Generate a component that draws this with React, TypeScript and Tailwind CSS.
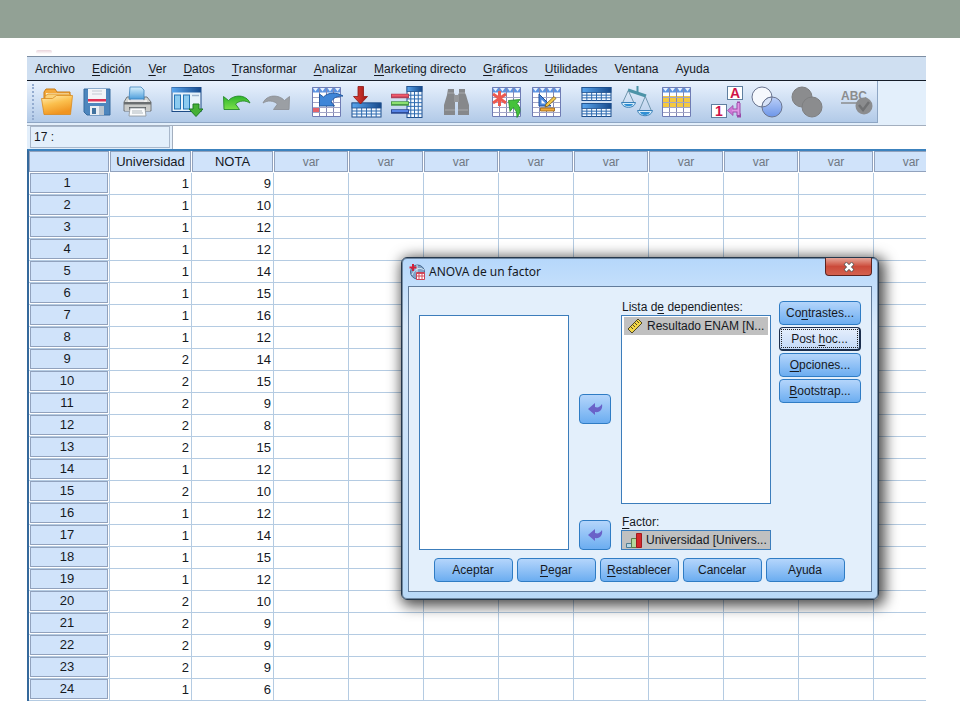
import type { ReactNode } from 'react';

interface Row {
  universidad: number;
  nota: number;
}

const UNIVERSIDAD = [1, 1, 1, 1, 1, 1, 1, 1, 2, 2, 2, 2, 2, 1, 2, 1, 1, 1, 1, 2, 2, 2, 2, 1];
const NOTA = [9, 10, 12, 12, 14, 15, 16, 12, 14, 15, 9, 8, 15, 12, 10, 12, 14, 15, 12, 10, 9, 9, 9, 6];
const rows: Row[] = UNIVERSIDAD.map((universidad, i) => ({ universidad, nota: NOTA[i] }));

const emptyColumns = [1, 2, 3, 4, 5, 6, 7, 8, 9];

// "_" marks the letter that follows it as the keyboard mnemonic
const menu = [
  'Archivo',
  '_Edición',
  '_Ver',
  '_Datos',
  '_Transformar',
  '_Analizar',
  '_Marketing directo',
  '_Gráficos',
  '_Utilidades',
  'Ventana',
  'Ayuda',
];

function Mnemonic({ text }: { text: string }) {
  const at = text.indexOf('_');
  if (at < 0) return <span>{text}</span>;
  return (
    <span>
      {text.slice(0, at)}
      <span className="underline underline-offset-2">{text[at + 1]}</span>
      {text.slice(at + 2)}
    </span>
  );
}

/* ---------- toolbar icons ---------- */

function Sheet({ band }: { band?: ReactNode }) {
  return (
    <g>
      <path d="M1 1.500h29v29H1z" fill="#fff" />
      {band}
      <path d="M1 1.500h29v5H1z" fill="#5b93e2" />
      {[2, 9, 16.5, 24].map((x) => (
        <path key={x} d={`M${x} 2h5l-2.500 3.500z`} fill="#e6f0ff" />
      ))}
      <path d="M8.500 2v29M15.500 2v29M22.500 2v29" stroke="#8187b4" />
      <path d="M1 11.500h29M1 16.500h29M1 21.500h29M1 26.500h29" stroke="#a3a6c6" />
      <path d="M1.500 1.500h28v29h-28z" fill="none" stroke="#6f7cb4" />
    </g>
  );
}

function BlueTable({ x, y, w, h, cols = 6, lines = 3 }: { x: number; y: number; w: number; h: number; cols?: number; lines?: number }) {
  return (
    <g>
      <rect x={x} y={y} width={w} height={h} fill="#f4f9ff" stroke="#1f4f8c" />
      {Array.from({ length: cols - 1 }, (_, i) => (
        <path key={i} d={`M${x + (w * (i + 1)) / cols} ${y + 5}v${h - 5}`} stroke="#2d6bb0" />
      ))}
      {Array.from({ length: lines - 1 }, (_, i) => (
        <path key={i} d={`M${x} ${y + 5 + ((h - 5) * (i + 1)) / lines}h${w}`} stroke="#2d6bb0" />
      ))}
      <rect x={x} y={y} width={w} height="5" fill="url(#navy)" stroke="#1f4f8c" strokeWidth="0.8" />
    </g>
  );
}

function IconDefs() {
  return (
    <svg className="absolute size-0" aria-hidden="true">
      <defs>
        <linearGradient id="navy" x1="0" x2="1" y1="0" y2="0">
          <stop offset="0" stopColor="#5aa6ee" />
          <stop offset="1" stopColor="#174a8c" />
        </linearGradient>
        <linearGradient id="folder" x1="0" x2="0.4" y1="0" y2="1">
          <stop offset="0" stopColor="#fff0b8" />
          <stop offset="0.5" stopColor="#fbc04e" />
          <stop offset="1" stopColor="#f09420" />
        </linearGradient>
        <linearGradient id="paper" x1="0" x2="0" y1="0" y2="1">
          <stop offset="0" stopColor="#d8f1fd" />
          <stop offset="1" stopColor="#4f9fdc" />
        </linearGradient>
        <linearGradient id="green" x1="0" x2="0" y1="0" y2="1">
          <stop offset="0" stopColor="#2fb52c" />
          <stop offset="1" stopColor="#7be04a" />
        </linearGradient>
        <linearGradient id="red" x1="0" x2="1" y1="0" y2="0">
          <stop offset="0" stopColor="#e2433a" />
          <stop offset="1" stopColor="#9e1512" />
        </linearGradient>
        <linearGradient id="lens" x1="0" x2="0" y1="0" y2="1">
          <stop offset="0" stopColor="#bcd0f8" />
          <stop offset="1" stopColor="#6c95e8" />
        </linearGradient>
      </defs>
    </svg>
  );
}

const openIcon = (
  <g>
    <path d="M3 6l2-3h9l2 3h13v18H3z" fill="#f3a93c" stroke="#c97c17" />
    <path d="M5 7h23v5H5z" fill="#fff3cf" />
    <path d="M4 10l3-2h22v18H4z" fill="#fad27a" stroke="#d98a1e" strokeWidth="0.8" />
    <path d="M0.500 12.500h11l4-3h16l-2 19H3z" fill="url(#folder)" stroke="#d98a1e" strokeWidth="0.8" />
  </g>
);

const saveIcon = (
  <g>
    <path d="M3 3h26v26H6l-3-3z" fill="#4d86bd" stroke="#376a9e" />
    <path d="M7 3h18v14H7z" fill="#f3f5f8" />
    <path d="M7 13h18v2.500H7z" fill="#e03355" />
    <path d="M11 5h10M11 8h10" stroke="#c3c9d2" />
    <path d="M9 20h14v9H9z" fill="#e9eef3" />
    <path d="M11 22h4v6h-4z" fill="#41739f" />
    <path d="M18 20h5v9h-5z" fill="#b8c4cf" />
  </g>
);

const printIcon = (
  <g>
    <path d="M6 11h3v4h14v-4h3l4 5v9H3v-9z" fill="#d3d5d2" stroke="#73777a" />
    <path d="M9 1h11l3 3v9H8z" fill="url(#paper)" stroke="#3e83bb" strokeWidth="0.8" />
    <path d="M3 16h27v2.500H3z" fill="#6a6e70" />
    <path d="M7 15h19" stroke="#f7f7f7" strokeWidth="1.500" />
    <path d="M4 19h25v6H4z" fill="#c9cbc9" />
    <path d="M8 21h17v3H8z" fill="#5e6264" />
    <path d="M9 22h15l1 8H8z" fill="#fafcfd" stroke="#8b9297" strokeWidth="0.8" />
    <path d="M11 25h10M11 27h11" stroke="#aeb7bd" />
  </g>
);

const recallIcon = (
  <g>
    <rect x="1" y="1.500" width="29" height="24" fill="#e7f2fb" stroke="#1d4a85" />
    <rect x="1" y="1.500" width="29" height="5" fill="url(#navy)" />
    <rect x="3.500" y="9" width="6" height="14" fill="#8ccbf0" stroke="#2474b5" />
    <rect x="12.500" y="9" width="6" height="14" fill="#8ccbf0" stroke="#2474b5" />
    <path d="M21 9.500h7" stroke="#9db4cc" strokeWidth="1.500" />
    <path d="M22 18h6v5h4l-7 7.500-7-7.500h4z" fill="#45b035" stroke="#1d7a22" />
  </g>
);

const undoIcon = (
  <path
    d="M2.500 10.500l5 4C13 8.500 25 8 29 17c-5-3-10.500-2.500-14.500 1l4 5.500H3z"
    fill="url(#green)"
    stroke="#26882a"
    strokeWidth="0.900"
  />
);

const redoIcon = (
  <path
    d="M28.500 10.500l-5 4C18 8.500 6 8 2 17c5-3 10.500-2.500 14.500 1l-4 5.500H28z"
    fill="#9b9fa4"
    stroke="#8d9196"
    strokeWidth="0.900"
  />
);

const gotoCaseIcon = (
  <g>
    <Sheet band={<path d="M1 21h7v5H1z" fill="#e4626a" />} />
    <path
      d="M8.500 8l4 3c5-5 13-5 19.500-1-6 0-10 2-12 6l3.500 4H8.500z"
      fill="#3f86d8"
      stroke="#1d529b"
      strokeWidth="0.900"
    />
  </g>
);

const gotoVariableIcon = (
  <g>
    <BlueTable x={1} y={17} w={29} h={14} />
    <path d="M7 0.500h5.500v10h4L9.500 18 2.500 10.500H7z" fill="url(#red)" stroke="#8d1512" strokeWidth="0.800" />
  </g>
);

const variablesIcon = (
  <g>
    <BlueTable x={16} y={0.5} w={15} h={31} cols={4} lines={7} />
    <path d="M0 10h18" stroke="#b0405a" strokeWidth="4.500" />
    <path d="M1 9.500h16" stroke="#f3596a" strokeWidth="2" />
    <path d="M0 17.500h18" stroke="#4a9a48" strokeWidth="4.500" />
    <path d="M1 17h16" stroke="#8be070" strokeWidth="2" />
    <path d="M0 25.500h18" stroke="#2e4c96" strokeWidth="4.500" />
    <path d="M1 25h16" stroke="#5684e6" strokeWidth="2" />
  </g>
);

const findIcon = (
  <g fill="#86888b">
    <path d="M7 3h6v4l1 2v20H3V19l3-10z" />
    <path d="M18 3h6v4l1 2 3 10v10H17V9l1-2z" />
    <path d="M13 9h5v7h-5z" fill="#97999c" />
    <path d="M7 7h6M18 7h6M4 24h10M17 24h10" stroke="#a7a9ac" />
  </g>
);

const insertCasesIcon = (
  <g>
    <Sheet />
    <path d="M8.500 5v15M2 8l13 9M15 8L2 17" stroke="#ec5a50" strokeWidth="3" />
    <path
      d="M17.500 14.500l11.500-1-3 4c4 4 4 9 0 14 0-5-1-8-4-10l-3 4z"
      fill="#46c23b"
      stroke="#218b28"
      strokeWidth="0.800"
    />
  </g>
);

const insertVariableIcon = (
  <g>
    <Sheet />
    <path d="M8 8v12h12z" fill="#4a86da" stroke="#1d4f9d" />
    <path d="M10.500 13.500v4h4z" fill="#fff" />
    <path d="M15 18l8-7.500 2 2-8 7.500-3 1z" fill="#f2c94f" stroke="#7c5c15" strokeWidth="0.800" />
    <path d="M9.500 22h14v3h-14z" fill="#f0a93a" stroke="#98600f" strokeWidth="0.800" />
  </g>
);

const splitIcon = (
  <g>
    <BlueTable x={1} y={1.5} w={29} h={13} />
    <BlueTable x={1} y={17.5} w={29} h={13} />
  </g>
);

const weightIcon = (
  <g fill="none" stroke="#4d94a8">
    <path d="M16.500 0v8" strokeWidth="2" />
    <path d="M7 4l18 6" strokeWidth="3" />
    <path d="M7 5L1.500 17M7.500 5l5.500 12M24 11l-6 14M24.500 11l6 14" stroke="#7096ae" />
    <path d="M0.500 16.500h14c-1 6.500-13 6.500-14 0z" fill="#d5ecfa" stroke="#3a80b8" />
    <path d="M16.500 24.500h15c-1 7-14 7-15 0z" fill="#d5ecfa" stroke="#3a80b8" />
    <path d="M3 18h9c-1 3-8 3-9 0zM19 26h10c-1 4-9 4-10 0z" fill="#2f8fd4" stroke="none" />
  </g>
);

const selectIcon = <Sheet band={<path d="M1 10h29v11H1z" fill="#f5c93e" />} />;

const labelsIcon = (
  <g>
    <rect x="16.500" y="0.500" width="15" height="13" fill="#fff" stroke="#5f7f9f" />
    <rect x="0.500" y="18.500" width="15" height="13" fill="#fff" stroke="#5f7f9f" />
    <text x="24" y="12" textAnchor="middle" fontSize="14" fontWeight="700" fill="#cf1248">A</text>
    <text x="8" y="30" textAnchor="middle" fontSize="14" fontWeight="700" fill="#cf1248">1</text>
    <path d="M26 17.500h3M27.500 17v13M26 29.500h4M27 24.500h-6" stroke="#9a4aa8" strokeWidth="4" fill="none" />
    <path d="M22 19.500v10l-5.500-5z" fill="#cf78d6" stroke="#9a4aa8" strokeWidth="0.800" />
    <path d="M27.500 17v12M27 24.500h-6" stroke="#e296e6" strokeWidth="2" fill="none" />
  </g>
);

const setsIcon = (
  <g stroke="#6a7590">
    <circle cx="11" cy="11" r="10" fill="#f5f8fd" />
    <circle cx="21" cy="21" r="10" fill="url(#lens)" />
    <path d="M21 11A10 10 0 0 1 11 21A10 10 0 0 1 21 11z" fill="#d6e2f7" />
  </g>
);

const allVariablesIcon = (
  <g fill="#8b8c8e" stroke="#7e7f81">
    <circle cx="11" cy="11" r="10" />
    <circle cx="21" cy="21" r="10" />
  </g>
);

const spellIcon = (
  <g>
    <text x="0" y="14" fontSize="12" fontWeight="700" fill="#8b8c8e">ABC</text>
    <path d="M0 17h17" stroke="#8b8c8e" strokeWidth="1.500" />
    <circle cx="23" cy="20" r="8.500" fill="#8b8c8e" />
    <path d="M18 19l4 5 6-8" fill="none" stroke="#707173" strokeWidth="2.500" />
  </g>
);

const toolGroups: { label: string; icon: ReactNode }[][] = [
  [
    { label: 'Abrir', icon: openIcon },
    { label: 'Guardar', icon: saveIcon },
    { label: 'Imprimir', icon: printIcon },
  ],
  [{ label: 'Recuperar cuadros de diálogo', icon: recallIcon }],
  [
    { label: 'Deshacer', icon: undoIcon },
    { label: 'Rehacer', icon: redoIcon },
  ],
  [
    { label: 'Ir a caso', icon: gotoCaseIcon },
    { label: 'Ir a variable', icon: gotoVariableIcon },
    { label: 'Variables', icon: variablesIcon },
  ],
  [{ label: 'Buscar', icon: findIcon }],
  [
    { label: 'Insertar caso', icon: insertCasesIcon },
    { label: 'Insertar variable', icon: insertVariableIcon },
  ],
  [
    { label: 'Segmentar archivo', icon: splitIcon },
    { label: 'Ponderar casos', icon: weightIcon },
    { label: 'Seleccionar casos', icon: selectIcon },
  ],
  [
    { label: 'Etiquetas de valor', icon: labelsIcon },
    { label: 'Usar conjuntos', icon: setsIcon },
    { label: 'Mostrar todas las variables', icon: allVariablesIcon },
  ],
  [{ label: 'Corrección ortográfica', icon: spellIcon }],
];

/* ---------- data editor ---------- */

function Toolbar() {
  return (
    <div className="flex h-11 bg-[#e3effb]">
      <div className="flex h-[42px] items-center gap-[10px] border-r border-b border-[#8ea6c4] bg-linear-to-b from-[#e9f2fd] to-[#b2cae8] pl-[5px]">
        <div className="-mr-[10px] h-9 w-[5px] border-l-2 border-dotted border-[#94acd0]" />
        {toolGroups.map((group) => (
          <div key={group[0].label} className="flex">
            {group.map((tool) => (
              <button key={tool.label} aria-label={tool.label} className="flex w-10 justify-center">
                <svg viewBox="0 0 32 32" className="size-8" aria-hidden="true">
                  {tool.icon}
                </svg>
              </button>
            ))}
          </div>
        ))}
      </div>
    </div>
  );
}

function ColumnHeader({ children, muted }: { children?: ReactNode; muted?: boolean }) {
  return (
    <th scope="col" className="h-[22px] bg-white p-0 pr-px pb-px font-normal">
      <div
        className={`h-[21px] border border-[#91a2bd] bg-[#d0e3fa] leading-5 ${muted ? 'text-[12px] text-[#6f7883]' : ''}`}
      >
        {children}
      </div>
    </th>
  );
}

function DataTable() {
  return (
    <div className="overflow-hidden border-t-2 border-l-2 border-t-[#3c82be] border-l-[#35699c]">
      <table className="w-[920px] table-fixed border-separate border-spacing-0 text-[13px] leading-5">
        <colgroup>
          <col className="w-[81px]" />
          <col className="w-[82px]" />
          <col className="w-[82px]" />
          {emptyColumns.map((c) => (
            <col key={c} className="w-[75px]" />
          ))}
        </colgroup>
        <thead>
          <tr>
            <ColumnHeader />
            <ColumnHeader>Universidad</ColumnHeader>
            <ColumnHeader>NOTA</ColumnHeader>
            {emptyColumns.map((c) => (
              <ColumnHeader key={c} muted>
                var
              </ColumnHeader>
            ))}
          </tr>
        </thead>
        <tbody>
          {rows.map((row, i) => (
            <tr key={i}>
              <th scope="row" className="h-[22px] border-r border-b border-[#b4cbe2] p-0 pr-px pb-px pl-px font-normal">
                <div className="h-5 border border-[#91a2bd] bg-[#d0e3fa] pr-1 leading-[18px]">{i + 1}</div>
              </th>
              <td className="border-r border-b border-[#b4cbe2] p-0 pr-0.5 text-right">{row.universidad}</td>
              <td className="border-r border-b border-[#b4cbe2] p-0 pr-0.5 text-right">{row.nota}</td>
              {emptyColumns.map((c) => (
                <td key={c} className="border-r border-b border-[#b4cbe2] p-0" />
              ))}
            </tr>
          ))}
        </tbody>
      </table>
    </div>
  );
}

/* ---------- dialog ---------- */

function DialogButton({ text, focused }: { text: string; focused?: boolean }) {
  if (focused) {
    return (
      <button className="h-6 w-full rounded-[4px] border border-r-2 border-b-2 border-[#1c2f4d] bg-linear-to-b from-[#e6effc] to-[#c3d9f7] p-px">
        <span className="flex h-full items-center justify-center border border-dotted border-[#222]">
          <Mnemonic text={text} />
        </span>
      </button>
    );
  }
  return (
    <button className="h-6 w-full rounded-[4px] border border-[#2f7cc4] bg-linear-to-b from-[#b4d5fb] to-[#6badf0] text-center">
      <Mnemonic text={text} />
    </button>
  );
}

function MoveButton({ label }: { label: string }) {
  return (
    <button
      aria-label={label}
      className="flex h-[30px] w-8 items-center justify-center rounded-[4px] border border-[#2f7cc4] bg-linear-to-b from-[#b4d5fb] to-[#6badf0]"
    >
      <svg viewBox="0 0 16 14" className="h-[14px] w-4" aria-hidden="true">
        <path d="M1 7l7-6v4c3 1 5 0 7-3 1 5-2 9-7 8v3z" fill="#6a62c8" />
      </svg>
    </button>
  );
}

function AnovaDialog() {
  return (
    <div
      role="dialog"
      aria-labelledby="anova-title"
      className="absolute top-[201px] left-[374px] rounded-[6px] border border-[#26384c] bg-linear-to-b from-[#b5d7fb] via-[#d9eafb] via-20% to-[#b9d9f8] px-[6px] pb-[7px] shadow-[3px_3px_14px_3px_rgba(0,0,0,0.7)] ring-1 ring-[#26384c]/50 ring-inset"
    >
      <div className="flex h-7 justify-between">
        <div className="flex items-center gap-1 pl-px">
          <svg viewBox="0 0 16 16" className="size-4" aria-hidden="true">
            <circle cx="8.500" cy="8" r="7" fill="#7fa3c8" stroke="#48698f" />
            <path d="M3 11c3-7 8-8 12-5M8 1v14" stroke="#dbe9f5" fill="none" />
            <path d="M4 0v7M0.500 3.500h7" stroke="#d3203a" strokeWidth="2" />
            <path d="M7.500 8.500h8v7h-8z" fill="#fff" stroke="#c94255" />
            <path d="M7.500 9.500h8M7.500 12h8M10 9v7M13 9v7" stroke="#d54b5c" />
          </svg>
          <h2 id="anova-title" className="font-['Noto_Sans','Open_Sans',sans-serif] text-[12px]">
            ANOVA de un factor
          </h2>
        </div>
        <button
          aria-label="Cerrar"
          className="flex h-[18px] w-[47px] items-center justify-center rounded-b-[4px] border border-t-0 border-[#5c2320] bg-linear-to-b from-[#e5a498] via-[#cb4a3a] via-50% to-[#d4614e]"
        >
          <svg viewBox="0 0 12 10" className="h-[10px] w-3" aria-hidden="true">
            <path d="M2 1l8 8M10 1l-8 8" stroke="#555" strokeWidth="4" />
            <path d="M2.500 1.500l7 7M9.500 1.500l-7 7" stroke="#fff" strokeWidth="2.500" />
          </svg>
        </button>
      </div>

      <div className="border border-[#627c9b] bg-[#e3effb] px-[10px] pb-[9px]">
        <div className="flex">
          {/* Source variables */}
          <ul aria-label="Variables" className="mt-7 w-[150px] border border-[#3c7dbb] bg-white" />

          <div className="mx-[10px] flex flex-col justify-between pt-[107px]">
            <MoveButton label="Mover a lista de dependientes" />
            <MoveButton label="Mover a factor" />
          </div>

          {/* Targets */}
          <div className="mr-2 w-[150px] pt-3">
            <div id="dependent-label" className="h-4 pl-px leading-4">
              <Mnemonic text="Lista d_e dependientes:" />
            </div>
            <ul aria-labelledby="dependent-label" className="h-[189px] border border-[#3c7dbb] bg-white p-0.5 pt-px">
              <li className="flex h-[18px] items-center bg-[#c0c0c0] pl-[3px] whitespace-nowrap">
                <svg viewBox="0 0 16 16" className="mr-1 size-4 shrink-0" aria-hidden="true">
                  <path d="M1 11L11 1l4 4L5 15z" fill="#f2d648" stroke="#4f4620" />
                  <path d="M4 9l2 2M6 7l2 2M8 5l2 2M10 3l2 2" stroke="#4f4620" />
                </svg>
                Resultado ENAM [N...
              </li>
            </ul>
            <label htmlFor="factor" className="mt-[10px] block h-4 pl-px leading-4">
              <Mnemonic text="_Factor:" />
            </label>
            <div className="flex h-5 items-center border border-[#3c7dbb] bg-[#c0c0c0] pl-1">
              <svg viewBox="0 0 16 16" className="mr-1 size-4 shrink-0" aria-hidden="true">
                <path d="M0.500 11.500h5v4h-5z" fill="#b8d6e6" stroke="#4d7c92" />
                <path d="M5.500 6.500h5v9h-5z" fill="#b5d89c" stroke="#5d7d4a" />
                <path d="M10.500 1.500h5v14h-5z" fill="#d5292c" stroke="#a3191c" />
              </svg>
              <input
                id="factor"
                readOnly
                value="Universidad [Univers..."
                className="w-full min-w-0 bg-transparent outline-none"
              />
            </div>
          </div>

          <div className="flex w-[82px] flex-col gap-0.5 pt-[14px]">
            <DialogButton text="Co_ntrastes..." />
            <DialogButton text="Post _hoc..." focused />
            <DialogButton text="_Opciones..." />
            <DialogButton text="_Bootstrap..." />
          </div>
        </div>

        <div className="flex justify-center pt-2 pr-0.5">
          <div className="grid grid-cols-[repeat(5,79px)] gap-1">
            <DialogButton text="Aceptar" />
            <DialogButton text="_Pegar" />
            <DialogButton text="_Restablecer" />
            <DialogButton text="Cancelar" />
            <DialogButton text="Ayuda" />
          </div>
        </div>
      </div>
    </div>
  );
}

export default function App() {
  return (
    <div className="min-h-screen bg-white pb-5 font-['Liberation_Sans',Arial,sans-serif] text-[12px] text-[#15191f]">
      <IconDefs />
      <div className="h-[38px] bg-[#92a195]" />
      <div className="mt-3 ml-9 h-1 w-4 rounded-full bg-linear-to-b from-[#e8d3da] to-white" />

      <main className="relative mt-0.5 mr-[34px] ml-[27px]">
        <div className="overflow-hidden border-t border-[#7d8ea3]">
          <nav className="flex h-6 items-center gap-[17px] border-b border-[#141c28] bg-[#cfdff1] pl-2">
            {menu.map((item) => (
              <button key={item} className="whitespace-nowrap">
                <Mnemonic text={item} />
              </button>
            ))}
          </nav>
          <Toolbar />
          <div className="flex h-6 gap-[2px] border-t border-[#a3afbf] bg-[#e3effb] pl-[3px]">
            <label
              htmlFor="cell"
              className="h-[22px] w-[140px] border border-[#a9b8cb] pl-[3px] leading-5"
            >
              17 :
            </label>
            <input id="cell" className="min-w-0 flex-1 border-l border-[#a3afbf] bg-white px-1 outline-none" />
          </div>
          <DataTable />
        </div>
        <AnovaDialog />
      </main>
    </div>
  );
}
